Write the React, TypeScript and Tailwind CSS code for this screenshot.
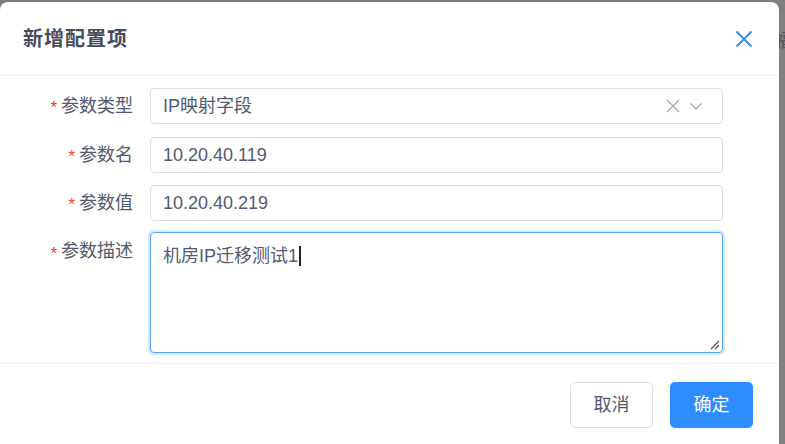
import React from "react"

const font = { fontFamily: '"Liberation Sans", "Noto Sans CJK SC", sans-serif' }

function Label({ text, top }: { text: string; top?: boolean }) {
  return (
    <div className={`w-[150px] shrink-0 pr-[17px] flex justify-end ${top ? "items-start pt-[10px]" : "items-center"}`}>
      <span className="text-[#ed4014] text-[17px] mr-[4px] leading-none mt-[3px]">*</span>
      <span className="text-[18px] text-[#515a6e] leading-none">{text}</span>
    </div>
  )
}

export default function App() {
  return (
    <div className="w-[785px] h-[444px] bg-[#808080] overflow-hidden pt-[2px] flex" style={font}>
      <div className="w-[779px] h-[460px] bg-white rounded-t-[8px] flex flex-col shrink-0">
        {/* header */}
        <div className="h-[74px] flex items-center justify-between pl-[23px] pr-[26px] border-b border-[#eef0f3]">
          <span className="text-[20px] font-bold text-[#464c5b] tracking-[1px]">新增配置项</span>
          <svg width="18" height="18" viewBox="0 0 18 18" className="text-[#2d8cf0]">
            <path d="M1.5 1.5L16.5 16.5M16.5 1.5L1.5 16.5" stroke="currentColor" strokeWidth="1.8" fill="none" />
          </svg>
        </div>

        {/* body */}
        <div className="pt-[12px] pr-[56px] flex flex-col">
          <div className="flex h-[36px] mb-[13px]">
            <Label text="参数类型" />
            <div className="flex-1 border border-[#dcdee2] rounded-[4px] flex items-center pl-[12px] pr-[19px]">
              <span className="flex-1 text-[18px] text-[#515a6e]">IP映射字段</span>
              <svg width="14" height="14" viewBox="0 0 14 14" className="text-[#a3a7b0]">
                <path d="M1 1L13 13M13 1L1 13" stroke="currentColor" strokeWidth="1.3" fill="none" />
              </svg>
              <svg width="14" height="14" viewBox="0 0 14 14" className="text-[#a3a7b0] ml-[9px]">
                <path d="M1.5 4.5L7 10L12.5 4.5" stroke="currentColor" strokeWidth="1.3" fill="none" />
              </svg>
            </div>
          </div>

          <div className="flex h-[36px] mb-[12px]">
            <Label text="参数名" />
            <div className="flex-1 border border-[#dcdee2] rounded-[4px] flex items-center pl-[12px]">
              <span className="text-[18px] text-[#515a6e]">10.20.40.119</span>
            </div>
          </div>

          <div className="flex h-[36px] mb-[11px]">
            <Label text="参数值" />
            <div className="flex-1 border border-[#dcdee2] rounded-[4px] flex items-center pl-[12px]">
              <span className="text-[18px] text-[#515a6e]">10.20.40.219</span>
            </div>
          </div>

          <div className="flex h-[121px]">
            <Label text="参数描述" top />
            <div className="relative flex-1 border border-[#57a3f3] rounded-[4px] shadow-[0_0_0_2px_rgba(45,140,240,0.2)] pl-[12px] pt-[11px]">
              <span className="text-[18px] text-[#515a6e] leading-[24px]">机房IP迁移测试1</span>
              <span className="inline-block w-[1.5px] h-[20px] bg-[#222] align-[-4px] ml-[1px]" />
              <svg width="10" height="10" viewBox="0 0 10 10" className="absolute right-[2px] bottom-[2px] text-[#555]">
                <path d="M1 9L9 1M5 9L9 5" stroke="currentColor" strokeWidth="1.2" fill="none" />
              </svg>
            </div>
          </div>
        </div>

        {/* footer */}
        <div className="mt-[10px] border-t border-[#eef0f3] pt-[18px] pr-[26px] flex justify-end gap-[17px]">
          <button className="w-[83px] h-[46px] border border-[#dcdee2] rounded-[5px] bg-white text-[18px] text-[#515a6e]">取消</button>
          <button className="w-[83px] h-[46px] rounded-[5px] bg-[#2d8cff] text-[18px] text-white">确定</button>
        </div>
      </div>
      <div className="flex-1 pt-[26px] overflow-hidden">
        <span className="block text-[18px] text-[#333] -ml-[4px] opacity-60">福</span>
      </div>
    </div>
  )
}
